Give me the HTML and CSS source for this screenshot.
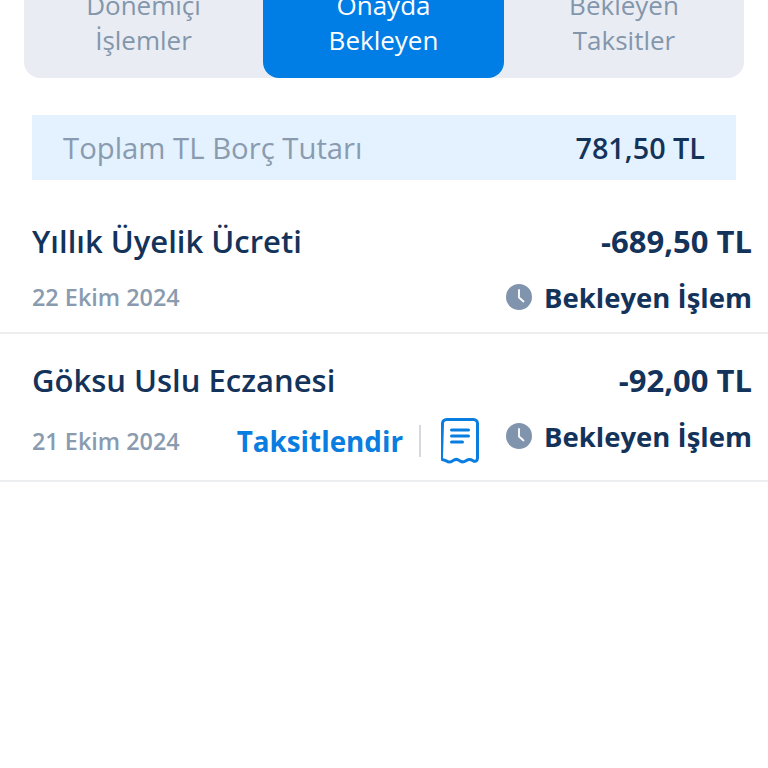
FILE: index.html
```html
<!DOCTYPE html>
<html lang="tr">
<head>
    <meta charset="UTF-8">
    <meta name="viewport" content="width=device-width, initial-scale=1.0">
    <title>Onayda Bekleyen</title>
    <link rel="stylesheet" href="styles.css">
</head>
<body>
    <div class="tabs">
        <div class="tab">Dönemiçi<br>İşlemler</div>
        <div class="tab active">Onayda<br>Bekleyen</div>
        <div class="tab">Bekleyen<br>Taksitler</div>
    </div>

    <div class="total">
        <span class="total-label">Toplam TL Borç Tutarı</span>
        <span class="total-value">781,50 TL</span>
    </div>

    <div class="row row-first">
        <div class="row-top">
            <span class="title">Yıllık Üyelik Ücreti</span>
            <span class="amount">-689,50 TL</span>
        </div>
        <div class="row-bottom">
            <span class="date">22 Ekim 2024</span>
            <span class="status">
                <svg class="clock" viewBox="0 0 26 26"><circle cx="13" cy="13" r="13" fill="#8094ad"/><path d="M13 6v7.5l4.5 4" fill="none" stroke="#fff" stroke-width="1.8" stroke-linecap="round" stroke-linejoin="round"/></svg>
                Bekleyen İşlem
            </span>
        </div>
    </div>

    <div class="row row-second">
        <div class="row-top">
            <span class="title">Göksu Uslu Eczanesi</span>
            <span class="amount">-92,00 TL</span>
        </div>
        <div class="row-bottom">
            <span class="date date-low">21 Ekim 2024</span>
            <span class="actions">
                <span class="installment">Taksitlendir</span>
                <span class="divider"></span>
                <svg class="receipt" viewBox="0 0 38 46"><path d="M1.5 5.5a4 4 0 0 1 4-4h27a4 4 0 0 1 4 4V40c0 3-2.5 4-4.5 2.7-2.5-1.6-4.500-1.600-7 0s-4.500 1.600-6.500 0-4.500-1.600-6.500 0-4.500 1.600-7 0c-2-1.300-4.500-.2-4.500-2.700z" fill="none" stroke="#0a7de0" stroke-width="3" stroke-linejoin="round"/><path d="M10.5 12h17M10.5 18h17M10.5 24h11" fill="none" stroke="#0a7de0" stroke-width="3" stroke-linecap="round"/></svg>
            </span>
            <span class="status">
                <svg class="clock" viewBox="0 0 26 26"><circle cx="13" cy="13" r="13" fill="#8094ad"/><path d="M13 6v7.5l4.5 4" fill="none" stroke="#fff" stroke-width="1.8" stroke-linecap="round" stroke-linejoin="round"/></svg>
                Bekleyen İşlem
            </span>
        </div>
    </div>
</body>
</html>
```

FILE: styles.css
```css
html, body {
    height: 100%;
    overflow: hidden;
}

body {
    margin: 0;
    background-color: #fff;
    font-family: 'Open Sans', sans-serif;
    color: #14335a;
}

.tabs {
    display: grid;
    grid-template-columns: 239px 241px 240px;
    margin: -30px 24px 0;
    height: 108px;
    background-color: #e9edf3;
    border-radius: 0 0 16px 16px;
}

.tab {
    display: flex;
    align-items: center;
    justify-content: center;
    text-align: center;
    padding-bottom: 2px;
    font-size: 26px;
    line-height: 35px;
    color: #8396ab;
}

.tab.active {
    background-color: #007ee5;
    color: #fff;
    border-radius: 0 0 16px 16px;
}

.total {
    display: flex;
    align-items: center;
    justify-content: space-between;
    margin: 37px 32px 0;
    height: 65px;
    padding: 0 31px;
    background-color: #e3f2fe;
}

.total-label {
    font-size: 29.3px;
    color: #8a9bb0;
}

.total-value {
    font-size: 28.8px;
    font-weight: 600;
}

.row {
    box-sizing: border-box;
    padding: 0 16px 0 32px;
    border-bottom: 2px solid #eceef0;
}

.row-first {
    height: 154px;
    padding-top: 40px;
}

.row-second {
    height: 148px;
    padding-top: 25px;
}

.row-top,
.row-bottom {
    display: flex;
    align-items: center;
    justify-content: space-between;
}

.row-top {
    height: 42px;
}

.row-bottom {
    height: 36px;
    margin-top: 17px;
}

.title {
    font-size: 31px;
    font-weight: 600;
}

.amount {
    font-size: 31px;
    font-weight: 700;
}

.date {
    font-size: 23.4px;
    font-weight: 600;
    color: #8a9bb0;
}

/* second row's date and actions sit a little under the status */
.date-low,
.actions {
    margin-top: 10px;
}

.status {
    display: flex;
    align-items: center;
    gap: 12px;
    font-size: 27.5px;
    font-weight: 700;
}

.clock {
    width: 26px;
    height: 26px;
}

.actions {
    display: flex;
    align-items: center;
    margin-left: auto;
    margin-right: 27px;
}

.installment {
    font-size: 27.8px;
    font-weight: 700;
    color: #0a7de0;
}

.divider {
    width: 2px;
    height: 32px;
    margin: 0 20px 0 16px;
    background-color: #d5d9de;
}

.receipt {
    width: 38px;
    height: 46px;
}
```
